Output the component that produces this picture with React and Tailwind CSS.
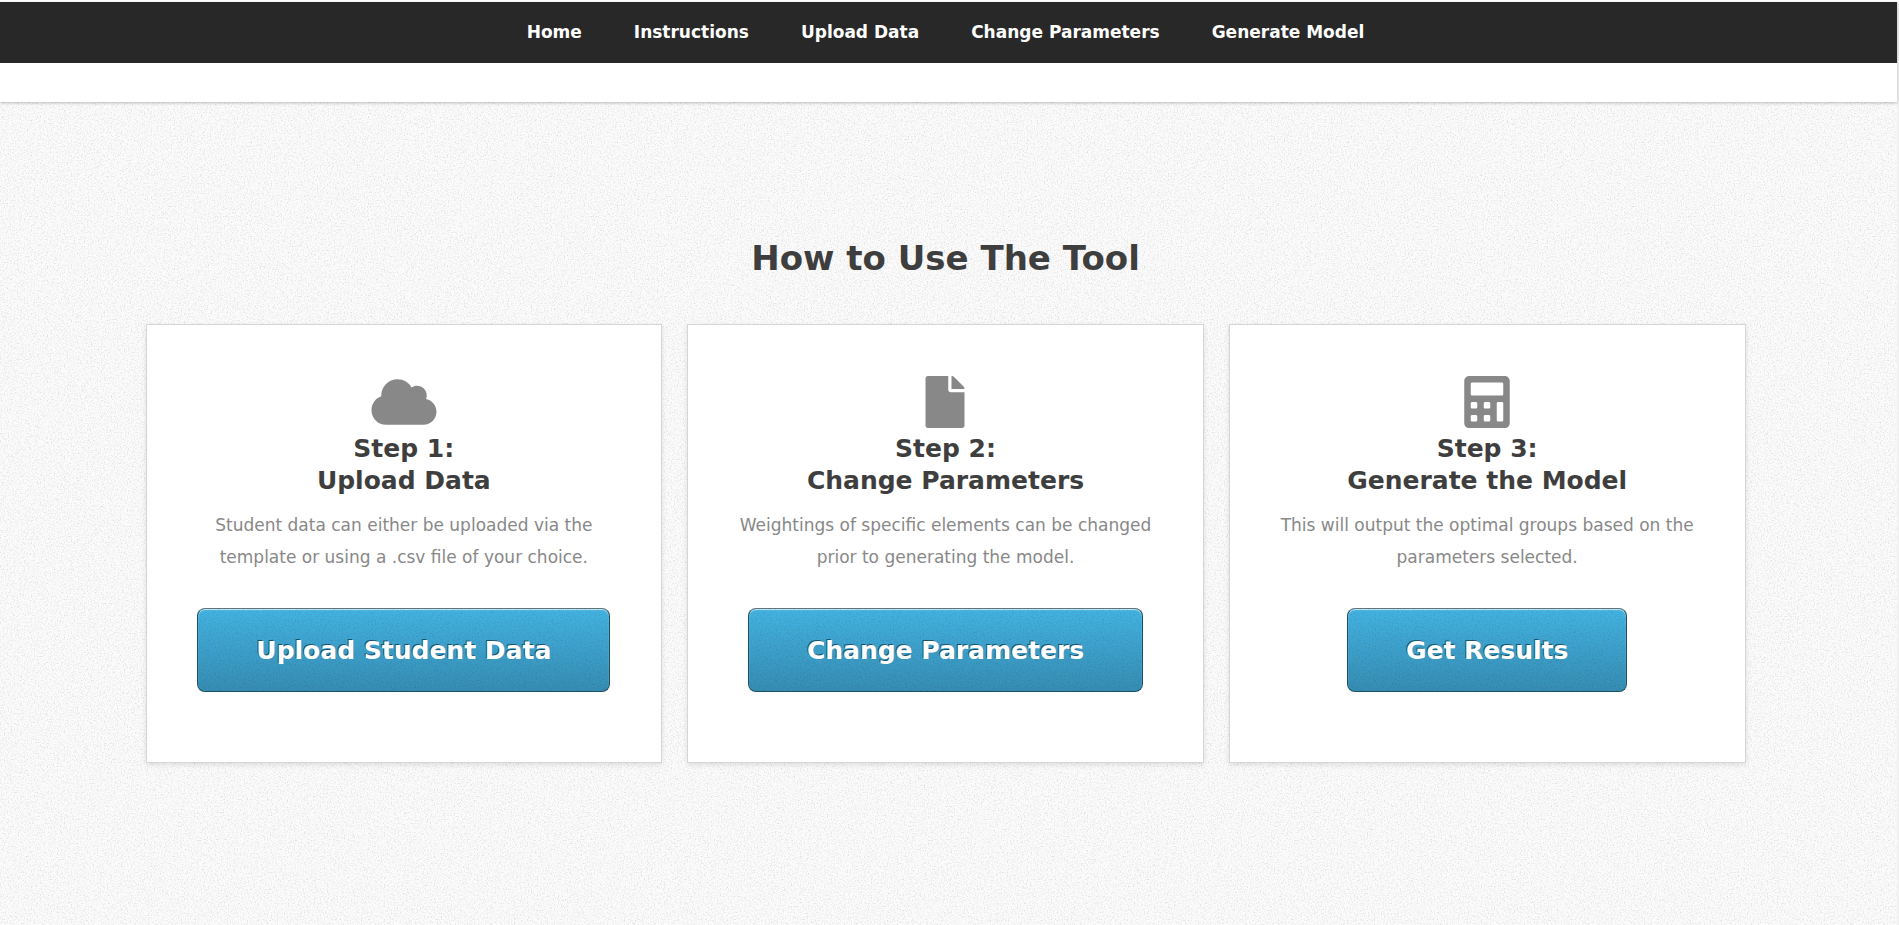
import { FaCloud, FaFile, FaCalculator } from "react-icons/fa";

const links = ["Home", "Instructions", "Upload Data", "Change Parameters", "Generate Model"];

const steps = [
  {
    icon: FaCloud,
    step: "Step 1:",
    title: "Upload Data",
    lines: ["Student data can either be uploaded via the", "template or using a .csv file of your choice."],
    action: "Upload Student Data",
  },
  {
    icon: FaFile,
    step: "Step 2:",
    title: "Change Parameters",
    lines: ["Weightings of specific elements can be changed", "prior to generating the model."],
    action: "Change Parameters",
  },
  {
    icon: FaCalculator,
    step: "Step 3:",
    title: "Generate the Model",
    lines: ["This will output the optimal groups based on the", "parameters selected."],
    action: "Get Results",
  },
];

function Grain({ id }) {
  return (
    <svg className="pointer-events-none absolute inset-0 -z-10 h-full w-full" aria-hidden="true">
      <filter id={id} x="0" y="0" width="100%" height="100%">
        <feTurbulence type="fractalNoise" baseFrequency="0.7" numOctaves="3" seed="4" />
        <feColorMatrix values="0 0 0 0 0  0 0 0 0 0  0 0 0 0 0  0.28 0 0 0 -0.132" />
      </filter>
      <rect width="100%" height="100%" filter={`url(#${id})`} />
    </svg>
  );
}

function StepCard({ icon: Icon, step, title, lines, action, index }) {
  return (
    <section className="flex flex-col items-center border border-[#d6d6d6] bg-white px-4 pt-[51px] pb-[70px] text-center shadow-[0_2px_5px_rgba(0,0,0,0.1)]">
      <Icon className="h-[52px] w-[66px] text-[#888]" />
      <h3 className="mt-[5px] text-[25px] leading-8 font-bold text-[#3e3e3e]">
        {step}
        <br />
        {title}
      </h3>
      <p className="mt-3 text-[17px] leading-8 text-[#888]">
        {lines[0]}
        <br />
        {lines[1]}
      </p>
      <button
        type="button"
        className="relative isolate mt-[35px] cursor-pointer overflow-hidden rounded-lg border border-[#1d4f63] border-t-[#5c7680] bg-linear-to-b from-[#43b3e2] to-[#368db3] px-[58px] pt-[23px] pb-[21px] text-[25px] leading-[38px] font-bold text-white shadow-[inset_0_1px_1px_rgba(255,255,255,0.75)] [text-shadow:-1px_-1px_0_rgba(12,58,78,0.75)]"
      >
        <Grain id={`button-grain-${index}`} />
        {action}
      </button>
    </section>
  );
}

export default function App() {
  return (
    <div className="min-h-screen border-t-2 border-white bg-[#f1f1f1] pr-[2px] font-['DejaVu_Sans',Verdana,sans-serif]">
      <div className="relative isolate flex min-h-[calc(100vh-2px)] flex-col bg-[#fbfbfb]">
        <Grain id="page-grain" />
        <header className="bg-white pb-[39px] shadow-[0_1px_3px_rgba(0,0,0,0.25)]">
          <nav className="flex h-[61px] items-center justify-center gap-[52px] bg-[#282828] pr-[6px] text-[17px] font-bold text-white">
            {links.map((label) => (
              <a key={label} href="#">
                {label}
              </a>
            ))}
          </nav>
        </header>
        <main className="flex-1 pt-[132px] pr-[6px] pb-20">
          <div className="mx-auto max-w-[1600px]">
            <h2 className="text-center text-[34px] leading-[48px] font-bold text-[#3e3e3e]">How to Use The Tool</h2>
            <div className="mt-[42px] grid grid-cols-3 gap-[25px]">
              {steps.map((item, index) => (
                <StepCard key={item.step} index={index} {...item} />
              ))}
            </div>
          </div>
        </main>
      </div>
    </div>
  );
}
